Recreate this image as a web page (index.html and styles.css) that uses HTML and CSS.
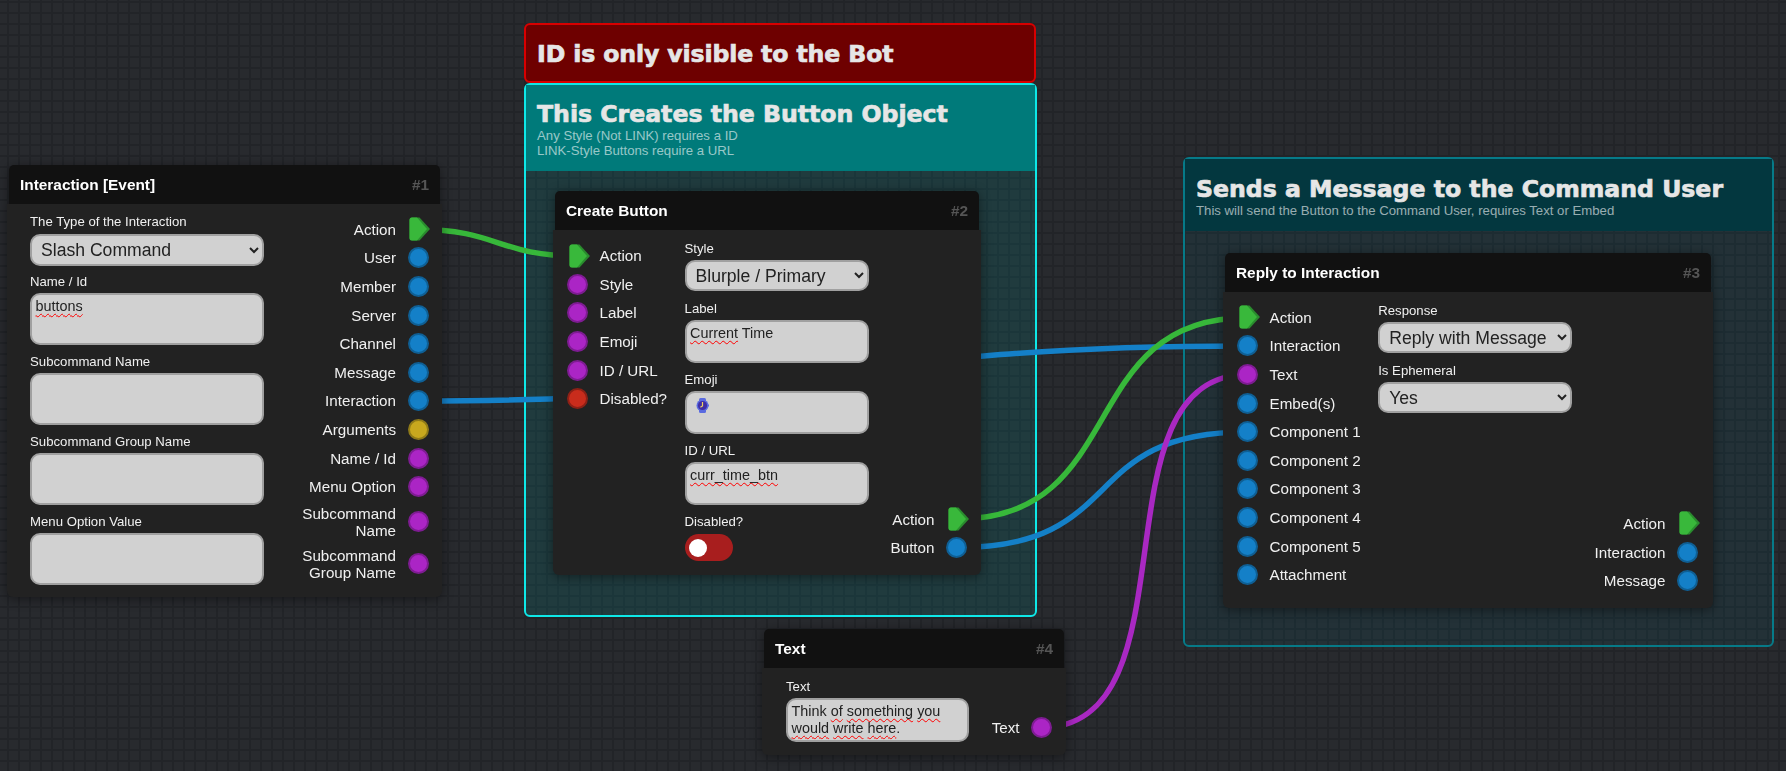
FILE: index.html
```html
<!DOCTYPE html>
<html lang="en">
<head>
<meta charset="UTF-8">
<title>Button flow</title>
<link rel="stylesheet" href="styles.css">
</head>
<body>

<svg class="defs" width="0" height="0">
<symbol id="arrow" viewBox="0 0 21 24">
<path fill="#2a8c2e" d="M3,0.5 H10.5 L21,12 L10.5,23.5 H3 Q0.5,23.5 0.5,21 V3 Q0.5,0.5 3,0.5 Z"/>
<path fill="#39b83b" d="M3,0.5 H8 L18,12 L8,23.5 H3 Q0.5,23.5 0.5,21 V3 Q0.5,0.5 3,0.5 Z"/>
</symbol>
</svg>

<main class="canvas">

<!-- comment groups -->
<section class="group group-red">
<h2>ID is only visible to the Bot</h2>
</section>

<section class="group group-teal">
<header>
<h2>This Creates the Button Object</h2>
<p>Any Style (Not LINK) requires a ID<br>LINK-Style Buttons require a URL</p>
</header>
</section>

<section class="group group-dark">
<header>
<h2>Sends a Message to the Command User</h2>
<p>This will send the Button to the Command User, requires Text or Embed</p>
</header>
</section>

<!-- connections -->
<svg class="wires" width="1786" height="771">
<path class="wire green" d="M418,229.5 C498,229.5 498,256 577.5,256"/>
<path class="wire blue" d="M418,401 C832,401 832,346 1247,346"/>
<path class="wire green" d="M958,519 C1130,519 1075,317.7 1247,317.7"/>
<path class="wire blue" d="M956.6,547.7 C1130,547.7 1075,432 1247,432"/>
<path class="wire purple" d="M1041,727.7 C1200,727.7 1090,374.7 1247,374.7"/>
</svg>

<!-- #1 -->
<article class="node node-event">
<div class="node-head"><span>Interaction [Event]</span><span class="node-num">#1</span></div>
<div class="node-body">
<div class="fields">
<div class="field">
<label>The Type of the Interaction</label>
<select><option>Slash Command</option></select>
</div>
<div class="field">
<label>Name / Id</label>
<div class="textbox"><span class="typo">buttons</span></div>
</div>
<div class="field">
<label>Subcommand Name</label>
<div class="textbox"></div>
</div>
<div class="field">
<label>Subcommand Group Name</label>
<div class="textbox"></div>
</div>
<div class="field">
<label>Menu Option Value</label>
<div class="textbox"></div>
</div>
</div>
<div class="ports outputs">
<div class="port"><span>Action</span><svg class="arrow"><use href="#arrow"/></svg></div>
<div class="port"><span>User</span><i class="socket s-blue"></i></div>
<div class="port"><span>Member</span><i class="socket s-blue"></i></div>
<div class="port"><span>Server</span><i class="socket s-blue"></i></div>
<div class="port"><span>Channel</span><i class="socket s-blue"></i></div>
<div class="port"><span>Message</span><i class="socket s-blue"></i></div>
<div class="port"><span>Interaction</span><i class="socket s-blue"></i></div>
<div class="port"><span>Arguments</span><i class="socket s-yellow"></i></div>
<div class="port"><span>Name / Id</span><i class="socket s-purple"></i></div>
<div class="port"><span>Menu Option</span><i class="socket s-purple"></i></div>
<div class="port port-tall"><span>Subcommand<br>Name</span><i class="socket s-purple"></i></div>
<div class="port port-tall"><span>Subcommand<br>Group Name</span><i class="socket s-purple"></i></div>
</div>
</div>
</article>

<!-- #2 -->
<article class="node node-button">
<div class="node-head"><span>Create Button</span><span class="node-num">#2</span></div>
<div class="node-body">
<div class="ports inputs">
<div class="port"><svg class="arrow"><use href="#arrow"/></svg><span>Action</span></div>
<div class="port"><i class="socket s-purple"></i><span>Style</span></div>
<div class="port"><i class="socket s-purple"></i><span>Label</span></div>
<div class="port"><i class="socket s-purple"></i><span>Emoji</span></div>
<div class="port"><i class="socket s-purple"></i><span>ID / URL</span></div>
<div class="port"><i class="socket s-red"></i><span>Disabled?</span></div>
</div>
<div class="fields">
<div class="field">
<label>Style</label>
<select><option>Blurple / Primary</option></select>
</div>
<div class="field">
<label>Label</label>
<div class="textbox textbox-mid"><span class="typo">Current</span> Time</div>
</div>
<div class="field">
<label>Emoji</label>
<div class="textbox textbox-mid">
<svg class="watch" width="13" height="15" viewBox="0 0 13 15">
<rect x="3" y="0" width="7" height="15" rx="1.5" fill="#5a6be0"/>
<rect x="12" y="6.5" width="1" height="2" fill="#5a6be0"/>
<circle cx="6.5" cy="7.5" r="6" fill="#5a6be0"/>
<circle cx="6.5" cy="7.5" r="4.6" fill="#3f2fa6"/>
<path d="M6.5,4 V8 L4.4,9.2" stroke="#f0d060" stroke-width="1.2" fill="none"/>
</svg>
</div>
</div>
<div class="field">
<label>ID / URL</label>
<div class="textbox textbox-mid"><span class="typo">curr_time_btn</span></div>
</div>
<div class="field">
<label>Disabled?</label>
<div class="toggle"><i></i></div>
</div>
</div>
<div class="ports outputs outputs-end">
<div class="port"><span>Action</span><svg class="arrow"><use href="#arrow"/></svg></div>
<div class="port"><span>Button</span><i class="socket s-blue"></i></div>
</div>
</div>
</article>

<!-- #3 -->
<article class="node node-reply">
<div class="node-head"><span>Reply to Interaction</span><span class="node-num">#3</span></div>
<div class="node-body">
<div class="ports inputs inputs-long">
<div class="port"><svg class="arrow"><use href="#arrow"/></svg><span>Action</span></div>
<div class="port"><i class="socket s-blue"></i><span>Interaction</span></div>
<div class="port"><i class="socket s-purple"></i><span>Text</span></div>
<div class="port"><i class="socket s-blue"></i><span>Embed(s)</span></div>
<div class="port"><i class="socket s-blue"></i><span>Component 1</span></div>
<div class="port"><i class="socket s-blue"></i><span>Component 2</span></div>
<div class="port"><i class="socket s-blue"></i><span>Component 3</span></div>
<div class="port"><i class="socket s-blue"></i><span>Component 4</span></div>
<div class="port"><i class="socket s-blue"></i><span>Component 5</span></div>
<div class="port"><i class="socket s-blue"></i><span>Attachment</span></div>
</div>
<div class="fields">
<div class="field">
<label>Response</label>
<select><option>Reply with Message</option></select>
</div>
<div class="field">
<label>Is Ephemeral</label>
<select><option>Yes</option></select>
</div>
</div>
<div class="ports outputs outputs-end">
<div class="port"><span>Action</span><svg class="arrow"><use href="#arrow"/></svg></div>
<div class="port"><span>Interaction</span><i class="socket s-blue"></i></div>
<div class="port"><span>Message</span><i class="socket s-blue"></i></div>
</div>
</div>
</article>

<!-- #4 -->
<article class="node node-text">
<div class="node-head"><span>Text</span><span class="node-num">#4</span></div>
<div class="node-body">
<div class="fields">
<div class="field">
<label>Text</label>
<div class="textbox textbox-mid">Think <span class="typo">of</span> <span class="typo">something</span> <span class="typo">you</span> <span class="typo">would</span> <span class="typo">write</span> <span class="typo">here</span>.</div>
</div>
</div>
<div class="ports outputs outputs-end">
<div class="port"><span>Text</span><i class="socket s-purple"></i></div>
</div>
</div>
</article>

</main>

</body>
</html>
```
FILE: styles.css
```css
html,body{
margin:0;
height:100%;
}

body{
font-family:"Liberation Sans",Arial,sans-serif;
color:#f0f0f0;
background-color:#282a2e;
background-image:
linear-gradient(#222428 2px,transparent 2px),
linear-gradient(90deg,#222428 2px,transparent 2px);
background-size:11px 11px;
background-position:0 1px,7px 0;
overflow:hidden;
}

.defs{
position:absolute;
}

.canvas{
position:relative;
width:1786px;
height:771px;
overflow:hidden;
}

/* comment groups */

.group{
position:absolute;
box-sizing:border-box;
border:2px solid;
border-radius:6px;
}

.group h2{
margin:0;
font-family:"DejaVu Sans",sans-serif;
font-weight:bold;
font-size:23.6px;
line-height:28px;
color:#e6e6e6;
-webkit-text-stroke:0.7px #e6e6e6;
}

.group p{
margin:0;
font-size:13.2px;
line-height:15px;
color:rgba(255,255,255,.6);
}

.group header{
padding:15px 11px 11px;
}

.group-red{
left:524px;
top:23px;
width:512px;
height:60px;
border-color:#d80000;
background:#6e0000;
padding:15px 11px 0;
}

.group-red h2{
letter-spacing:-0.12px;
}

.group-teal{
left:524px;
top:83px;
width:513px;
height:534px;
border-color:#0ee8e8;
background:rgba(0,128,128,.2);
}

.group-teal header{
height:86px;
box-sizing:border-box;
background:#007a7a;
}

.group-dark{
left:1183px;
top:157px;
width:591px;
height:490px;
border-color:#067a88;
background:rgba(0,110,120,.12);
}

.group-dark header{
height:72px;
box-sizing:border-box;
padding-top:16px;
background:#03373f;
}

/* wires */

.wires{
position:absolute;
left:0;
top:0;
}

.wire{
fill:none;
stroke-width:5.5;
}

.green{stroke:#37b83a;}
.blue{stroke:#1480c8;}
.purple{stroke:#a928c2;}

/* nodes */

.node{
position:absolute;
filter:drop-shadow(0 2px 6px rgba(0,0,0,.45));
}

.node-event{left:7px;top:165px;width:435px;}
.node-button{left:553px;top:191px;width:428px;}
.node-reply{left:1223px;top:253px;width:490px;}
.node-text{left:762px;top:629px;width:304px;}

.node-head{
height:39px;
margin:0 2px;
padding:0 11px;
display:flex;
justify-content:space-between;
align-items:center;
background:#111;
border-radius:5px 5px 0 0;
font-size:15.4px;
font-weight:bold;
color:#fff;
}

.node-num{
color:#555;
}

.node-body{
display:flex;
gap:17.5px;
padding:11px 14px 14px;
background:#222;
border-radius:0 0 6px 6px;
}

.node-event .node-body{
padding:10px 13.5px 12px 23px;
justify-content:space-between;
}

.node-reply .node-body{
padding:11px 15px 13px 14px;
}

.node-text .node-body{
padding:11px 14px 13px 24px;
justify-content:space-between;
}

/* ports */

.ports{
display:flex;
flex-direction:column;
}

.node-event .outputs{
margin-top:1px;
}

.node-button .inputs{
margin-top:0.5px;
}

.port{
min-height:28.6px;
display:flex;
align-items:center;
gap:11.5px;
font-size:15.2px;
line-height:17px;
}

.port-tall{
padding:4px 0;
}

.outputs{
text-align:right;
align-items:flex-end;
}

.outputs-end{
margin-left:auto;
align-self:flex-end;
}

.node-button .outputs-end{
margin-bottom:-1px;
}

.inputs-long{
padding-bottom:6px;
}

.socket{
flex:none;
box-sizing:border-box;
width:21px;
height:21px;
border:2px solid;
border-radius:50%;
}

.s-blue{background:#1480c8;border-color:#0f5f94;}
.s-purple{background:#ab25c5;border-color:#7e1c92;}
.s-yellow{background:#c8a81e;border-color:#8f7a18;}
.s-red{background:#c92c1c;border-color:#8c2016;}

.arrow{
flex:none;
width:21px;
height:24px;
margin:0 -1.5px 0 1.5px;
}

/* fields */

.fields{
display:flex;
flex-direction:column;
gap:9px;
}

.node-event .fields{width:234px;}
.node-button .fields{width:184px;}
.node-reply .fields{width:194px;}
.node-text .fields{width:183px;}

.field{
display:flex;
flex-direction:column;
gap:3px;
}

.field label{
font-size:13.2px;
line-height:16px;
}

select,
.textbox{
box-sizing:border-box;
width:100%;
background:#d1d1d1;
border:2px solid #a0a0a0;
border-radius:10px;
color:#222;
font-family:"Liberation Sans",Arial,sans-serif;
}

select{
height:31px;
margin-bottom:1px;
padding-left:5px;
font-size:17.6px;
outline:none;
}

.node-event select{
height:32px;
margin:1px 0 -1px;
}

.textbox{
height:52px;
padding:3px 3.5px;
font-size:14.4px;
line-height:16.5px;
}

.textbox-mid{
height:43px;
}

.node-text .textbox-mid{
height:44px;
}

.typo{
text-decoration:underline wavy #ff0000 1.3px;
text-decoration-skip-ink:none;
text-underline-offset:1.5px;
}

.watch{
display:block;
margin:2px 0 0 6px;
}

.toggle{
width:48px;
height:27px;
margin-top:1px;
box-sizing:border-box;
padding:4px;
background:#a81e1e;
border-radius:14px;
}

.toggle i{
display:block;
width:18px;
height:18px;
margin-top:0.5px;
background:#fff;
border-radius:50%;
}
```
